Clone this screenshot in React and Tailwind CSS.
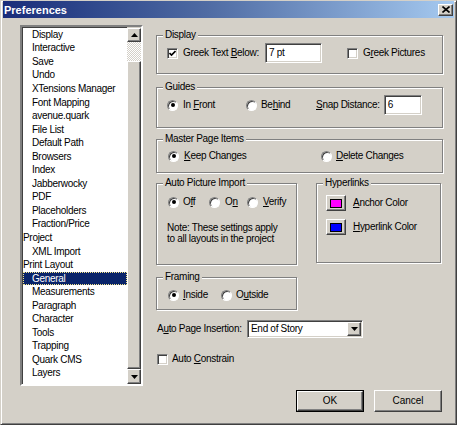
import React from 'react';

const sunken =
  'border border-t-[#808080] border-l-[#808080] border-r-white border-b-white shadow-[inset_1px_1px_0_#404040,inset_-1px_-1px_0_#d4d0c8]';
const raised =
  'border border-t-white border-l-white border-r-[#404040] border-b-[#404040] shadow-[inset_-1px_-1px_0_#808080]';

const items = [
  { t: 'Display', s: true },
  { t: 'Interactive', s: true },
  { t: 'Save', s: true },
  { t: 'Undo', s: true },
  { t: 'XTensions Manager', s: true },
  { t: 'Font Mapping', s: true },
  { t: 'avenue.quark', s: true },
  { t: 'File List', s: true },
  { t: 'Default Path', s: true },
  { t: 'Browsers', s: true },
  { t: 'Index', s: true },
  { t: 'Jabberwocky', s: true },
  { t: 'PDF', s: true },
  { t: 'Placeholders', s: true },
  { t: 'Fraction/Price', s: true },
  { t: 'Project', s: false },
  { t: 'XML Import', s: true },
  { t: 'Print Layout', s: false },
  { t: 'General', s: true, sel: true },
  { t: 'Measurements', s: true },
  { t: 'Paragraph', s: true },
  { t: 'Character', s: true },
  { t: 'Tools', s: true },
  { t: 'Trapping', s: true },
  { t: 'Quark CMS', s: true },
  { t: 'Layers', s: true },
];

function Check({ checked }) {
  return (
    <div className={`w-[11px] h-[11px] bg-white shrink-0 flex items-center justify-center ${sunken}`}>
      {checked && (
        <svg width="7" height="7" viewBox="0 0 7 7">
          <polyline points="0.5,3 2.5,5 6.5,1" fill="none" stroke="#000" strokeWidth="1.6" />
        </svg>
      )}
    </div>
  );
}

function Radio({ checked }) {
  return (
    <div className="w-[11px] h-[11px] rounded-full bg-white shrink-0 flex items-center justify-center border border-t-[#808080] border-l-[#808080] border-r-white border-b-white shadow-[inset_1px_1px_0_#404040]">
      {checked && <div className="w-[4px] h-[4px] rounded-full bg-black" />}
    </div>
  );
}

function Group({ label, className, children }) {
  return (
    <div className={`relative border border-[#808080] shadow-[1px_1px_0_#fff,inset_1px_1px_0_#fff] ${className}`}>
      <span className="absolute left-[6px] -top-[7px] px-[2px] bg-[#d4d0c8] leading-[12px]">{label}</span>
      {children}
    </div>
  );
}

function Arrow({ down }) {
  return (
    <svg width="7" height="4" viewBox="0 0 7 4">
      <polygon points={down ? '0,0 7,0 3.5,4' : '0,4 7,4 3.5,0'} fill="#000" />
    </svg>
  );
}

export default function App() {
  return (
    <div className="w-[457px] h-[425px] bg-[#d4d0c8] border border-t-[#d4d0c8] border-l-[#d4d0c8] border-r-[#404040] border-b-[#404040] shadow-[inset_1px_1px_0_#fff,inset_-1px_-1px_0_#808080] flex flex-col overflow-hidden font-['Liberation_Sans',Arial,sans-serif] text-[10px] leading-[12px] tracking-[-0.3px] text-black">
      {/* title bar */}
      <div className="mx-[2px] h-[17px] shrink-0 flex items-center justify-between bg-linear-to-r from-[#1a2c7a] via-[#4f6ba3] via-45% to-[#a6caf0]">
        <span className="pl-[1px] text-white font-bold text-[11px] tracking-normal">Preferences</span>
        <div className={`mr-[1px] w-[15px] h-[12px] bg-[#d4d0c8] flex items-center justify-center ${raised}`}>
          <svg width="8" height="7" viewBox="0 0 8 7">
            <path d="M0.5 0.5 L7.5 6.5 M7.5 0.5 L0.5 6.5" stroke="#000" strokeWidth="1.6" />
          </svg>
        </div>
      </div>

      <div className="flex">
        {/* category list */}
        <div className={`ml-[19px] mt-[7px] w-[123px] h-[361px] bg-white flex border-2 border-t-[#808080] border-l-[#808080] border-r-white border-b-white`}>
          <div className="flex-1 flex flex-col shadow-[inset_1px_1px_0_#404040] pt-[1px] pl-[1px]">
            {items.map((it) => (
              <div
                key={it.t}
                className={`h-[13.56px] shrink-0 flex items-center whitespace-nowrap ${it.s ? 'pl-[9px]' : 'pl-0'} ${it.sel ? 'bg-[#0a246a] text-white outline outline-1 outline-dotted outline-[#f5e58a] -outline-offset-1' : ''}`}
              >
                {it.t}
              </div>
            ))}
          </div>
          <div className="w-[14px] flex flex-col bg-[#d4d0c8] pt-[1px]">
            <div className={`h-[14px] bg-[#d4d0c8] flex items-center justify-center ${raised}`}>
              <Arrow />
            </div>
            <div className="h-[19px] bg-[repeating-conic-gradient(#fff_0%_25%,#d4d0c8_0%_50%)] bg-[length:2px_2px]" />
            <div className={`flex-1 bg-[#d4d0c8] ${raised}`} />
            <div className={`h-[15px] bg-[#d4d0c8] flex items-center justify-center ${raised}`}>
              <Arrow down />
            </div>
          </div>
        </div>

        {/* settings */}
        <div className="ml-[13px] mt-[17px] w-[287px] flex flex-col">
          <Group label="Display" className="h-[39px]">
            <div className="flex items-center h-[20px] mt-[7px] pl-[10px]">
              <Check checked />
              <span className="ml-[5px]">
                Greek Text <span className="underline">B</span>elow:
              </span>
              <div className={`ml-[6px] w-[57px] h-[20px] bg-white flex items-center pl-[3px] ${sunken}`}>7 pt</div>
              <div className="ml-[25px] flex items-center">
                <Check />
                <span className="ml-[5px]">
                  G<span className="underline">r</span>eek Pictures
                </span>
              </div>
            </div>
          </Group>

          <Group label="Guides" className="mt-[13px] h-[41px]">
            <div className="flex items-center h-[20px] mt-[7px] pl-[10px]">
              <div className="w-[79px] flex items-center">
                <Radio checked />
                <span className="ml-[5px]">
                  In <span className="underline">F</span>ront
                </span>
              </div>
              <div className="w-[70px] flex items-center">
                <Radio />
                <span className="ml-[4px]">
                  Be<span className="underline">h</span>ind
                </span>
              </div>
              <span>
                <span className="underline">S</span>nap Distance:
              </span>
              <div className={`ml-[4px] w-[38px] h-[20px] bg-white flex items-center pl-[3px] ${sunken}`}>6</div>
            </div>
          </Group>

          <Group label="Master Page Items" className="mt-[11px] h-[34px]">
            <div className="flex items-center h-[12px] mt-[10px] pl-[11px]">
              <div className="w-[153px] flex items-center">
                <Radio checked />
                <span className="ml-[5px]">
                  <span className="underline">K</span>eep Changes
                </span>
              </div>
              <Radio />
              <span className="ml-[4px]">
                <span className="underline">D</span>elete Changes
              </span>
            </div>
          </Group>

          <div className="mt-[10px] flex gap-[19px] items-start">
            <Group label="Auto Picture Import" className="w-[141px] h-[82px]">
              <div className="flex items-center h-[12px] mt-[12px] pl-[11px]">
                <div className="w-[41px] flex items-center">
                  <Radio checked />
                  <span className="ml-[4px]">
                    O<span className="underline">f</span>f
                  </span>
                </div>
                <div className="w-[38px] flex items-center">
                  <Radio />
                  <span className="ml-[5px]">
                    O<span className="underline">n</span>
                  </span>
                </div>
                <Radio />
                <span className="ml-[5px]">
                  <span className="underline">V</span>erify
                </span>
              </div>
              <p className="mt-[14px] pl-[10px] leading-[11px]">
                Note: These settings apply
                <br />
                to all layouts in the project
              </p>
            </Group>

            <Group label="Hyperlinks" className="w-[125px] h-[80px]">
              <div className="pt-[11px] pl-[9px] flex flex-col gap-[8px]">
                <div className="flex items-center">
                  <div className={`w-[20px] h-[16px] bg-[#d4d0c8] flex items-center justify-center ${raised}`}>
                    <div className="w-[12px] h-[9px] bg-[#ff00ff] border border-black" />
                  </div>
                  <span className="ml-[7px]">
                    <span className="underline">A</span>nchor Color
                  </span>
                </div>
                <div className="flex items-center">
                  <div className={`w-[20px] h-[16px] bg-[#d4d0c8] flex items-center justify-center ${raised}`}>
                    <div className="w-[12px] h-[9px] bg-[#0000ff] border border-black" />
                  </div>
                  <span className="ml-[7px]">
                    <span className="underline">H</span>yperlink Color
                  </span>
                </div>
              </div>
            </Group>
          </div>

          <Group label="Framing" className="mt-[12px] w-[141px] h-[33px]">
            <div className="flex items-center h-[12px] mt-[11px] pl-[11px]">
              <div className="w-[53px] flex items-center">
                <Radio checked />
                <span className="ml-[4px]">
                  <span className="underline">I</span>nside
                </span>
              </div>
              <Radio />
              <span className="ml-[4px]">
                O<span className="underline">u</span>tside
              </span>
            </div>
          </Group>

          <div className="mt-[10px] flex items-center h-[18px] pl-[1px]">
            <span className="w-[90px] whitespace-nowrap">
              A<span className="underline">u</span>to Page Insertion:
            </span>
            <div className={`w-[116px] h-[18px] bg-white flex items-center justify-between pl-[3px] pr-[1px] ${sunken}`}>
              <span>End of Story</span>
              <div className={`w-[14px] h-[14px] bg-[#d4d0c8] flex items-center justify-center ${raised}`}>
                <Arrow down />
              </div>
            </div>
          </div>

          <div className="mt-[15px] flex items-center pl-[1px]">
            <Check />
            <span className="ml-[4px]">
              Auto <span className="underline">C</span>onstrain
            </span>
          </div>

          <div className="mt-[25px] flex justify-end gap-[10px] pr-[1px] tracking-normal">
            <div className="w-[68px] h-[22px] border border-black">
              <div className={`w-full h-full bg-[#d4d0c8] flex items-center justify-center ${raised}`}>OK</div>
            </div>
            <div className={`w-[68px] h-[22px] bg-[#d4d0c8] flex items-center justify-center ${raised}`}>Cancel</div>
          </div>
        </div>
      </div>
    </div>
  );
}
